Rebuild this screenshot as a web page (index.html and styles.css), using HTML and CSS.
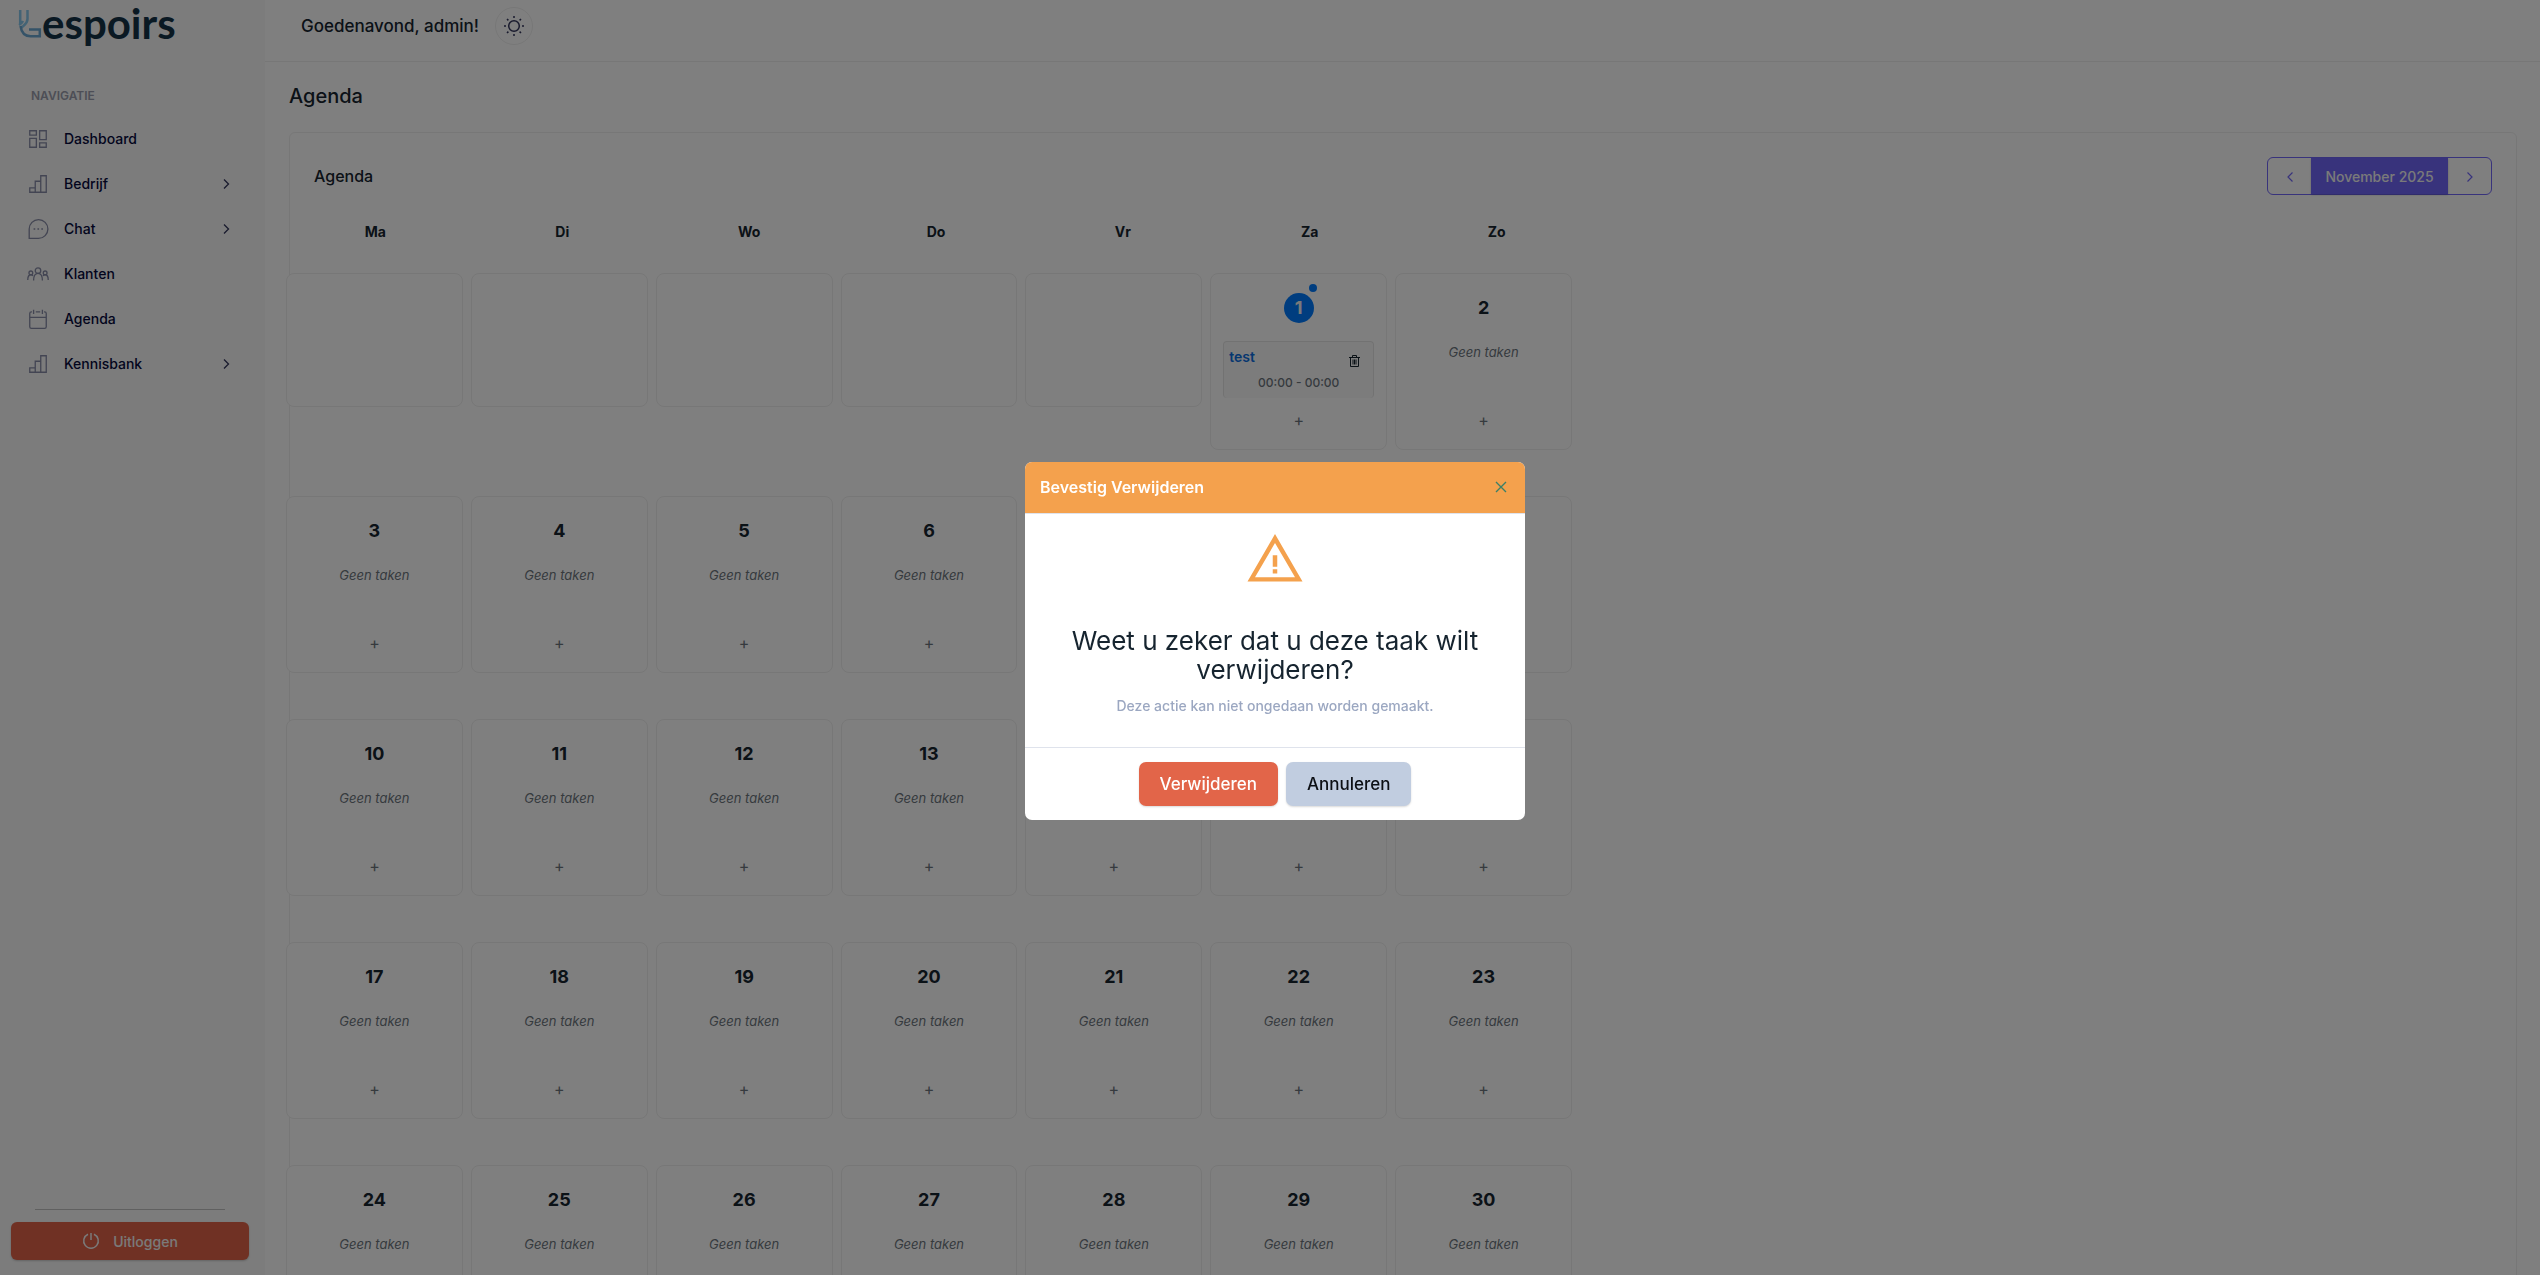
FILE: index.html
```
<!DOCTYPE html>
<html lang="nl">
<head>
    <meta charset="UTF-8">
    <meta name="viewport" content="width=device-width, initial-scale=1.0">
    <title>Agenda</title>
    <link rel="stylesheet" href="styles.css">
</head>
<body>
    <div class="layout">
        <aside class="sidebar">
            <a href="#" class="logo" aria-label="Lespoirs">
                <svg class="logo-mark" width="25" height="30" viewBox="0 0 25 30" fill="none" stroke-width="2.500">
                    <path stroke="#86c6ea" d="M3.200 2v13.500M10.500 2v9c0 5-3.500 6-6.500 9M6 13c-1 2-2 3-4 4"/>
                    <path stroke="#6aa6d0" d="M3.500 18c1 7 5 10.200 10 10.200h9.300v-6.700H12"/>
                </svg>
                <span class="logo-text">espoirs</span>
            </a>
            <p class="nav-label">NAVIGATIE</p>
            <nav class="nav" id="nav"></nav>
            <div class="sidebar-footer">
                <hr>
                <button type="button" class="logout">
                    <svg width="18" height="18" viewBox="0 0 18 18" fill="none" stroke="currentColor" stroke-width="1.500"><path d="M6 2.200a7.300 7.300 0 1 0 6 0M9 1v7"/></svg>
                    Uitloggen
                </button>
            </div>
        </aside>

        <div class="main">
            <header class="topbar">
                <span class="greeting">Goedenavond, admin!</span>
                <button type="button" class="theme-btn" aria-label="Thema">
                    <svg width="22" height="22" viewBox="0 0 22 22" fill="none" stroke="currentColor" stroke-width="1.500">
                        <circle cx="11" cy="11" r="5.300"/>
                        <path d="M11 1v2M11 19v2M1 11h2M19 11h2M4 4l1.400 1.400M16.600 16.600L18 18M4 18l1.400-1.400M16.600 5.400L18 4"/>
                    </svg>
                </button>
            </header>

            <main class="content">
                <h1>Agenda</h1>
                <section class="card">
                    <div class="card-header">
                        <h2>Agenda</h2>
                        <div class="month-nav">
                            <button type="button" aria-label="Vorige maand"><svg width="6" height="10" viewBox="0 0 6 10" fill="none" stroke="currentColor" stroke-width="1.200"><path d="M5.500.500L1 5l4.500 4.500"/></svg></button>
                            <button type="button" class="current">November 2025</button>
                            <button type="button" aria-label="Volgende maand"><svg width="6" height="10" viewBox="0 0 6 10" fill="none" stroke="currentColor" stroke-width="1.200"><path d="M.500.500L5 5 .500 9.500"/></svg></button>
                        </div>
                    </div>
                    <div class="weekdays">
                        <span>Ma</span><span>Di</span><span>Wo</span><span>Do</span><span>Vr</span><span>Za</span><span>Zo</span>
                    </div>
                    <div class="calendar" id="calendar"></div>
                </section>
            </main>
        </div>
    </div>

    <div class="overlay">
        <div class="modal" role="dialog" aria-modal="true" aria-labelledby="modalTitle">
            <div class="modal-header">
                <h5 id="modalTitle">Bevestig Verwijderen</h5>
                <button type="button" class="close" aria-label="Sluiten">
                    <svg width="12" height="12" viewBox="0 0 12 12" stroke="currentColor" stroke-width="1.400"><path d="M1 1l10 10M11 1L1 11"/></svg>
                </button>
            </div>
            <div class="modal-body">
                <svg class="warning" width="60" height="60" viewBox="0 0 24 24" fill="currentColor">
                    <path d="M12 2L1 21h22zM12 5.600L20 19.300H4zM11.100 10.500v4.600h1.800v-4.600zM11.100 16.100v1.700h1.800v-1.700z" fill-rule="evenodd"/>
                </svg>
                <h4>Weet u zeker dat u deze taak wilt verwijderen?</h4>
                <p>Deze actie kan niet ongedaan worden gemaakt.</p>
            </div>
            <div class="modal-footer">
                <button type="button" class="btn btn-danger">Verwijderen</button>
                <button type="button" class="btn btn-light">Annuleren</button>
            </div>
        </div>
    </div>

    <script src="script.js"></script>
</body>
</html>
```
FILE: styles.css
```
* {
    box-sizing: border-box;
}
body {
    margin: 0;
    height: 100vh;
    overflow: hidden;
    font-family: Inter, "Open Sans", sans-serif;
    font-size: 14px;
    font-weight: 500;
    color: #16242f;
    background: #fff;
}
h1, h2, h4, h5, p {
    margin: 0;
}
button {
    font: inherit;
    cursor: pointer;
}
.layout {
    display: flex;
    height: 100vh;
}

/* sidebar */
.sidebar {
    display: flex;
    flex-direction: column;
    flex: 0 0 265px;
    background: #f8f8f8;
}
.logo {
    display: flex;
    height: 52px;
    padding: 8px 0 0 17px;
    text-decoration: none;
}
.logo-text {
    font-family: Lato, sans-serif;
    font-size: 42px;
    font-weight: 700;
    line-height: 30px;
    color: #143247;
}
.nav-label {
    padding: 36px 0 0 31px;
    font-size: 12px;
    font-weight: 600;
    line-height: 16px;
    color: #9a9dac;
}
.nav {
    padding-top: 12px;
}
.nav a {
    display: flex;
    align-items: center;
    height: 45px;
    padding: 0 35px 0 27px;
    color: #060a3c;
    text-decoration: none;
}
.nav a span {
    flex: 1;
    padding-left: 15px;
}
.nav-icon {
    color: #878ba6;
}
.chevron {
    color: #33365c;
}
.sidebar-footer {
    margin-top: auto;
    padding: 0 16px 15px 11px;
}
.sidebar-footer hr {
    margin: 0 24px 12px;
    border: 0;
    border-top: 1px solid #c0c0c0;
}
.logout {
    display: flex;
    justify-content: center;
    align-items: center;
    gap: 13px;
    width: 100%;
    height: 38px;
    border: 0;
    border-radius: 6px;
    background: #e16349;
    color: #f4f4f4;
    box-shadow: 0 1px 2px rgba(0, 0, 0, 0.2);
}

/* top bar */
.main {
    flex: 1;
    min-width: 0;
    overflow: hidden;
}
.topbar {
    display: flex;
    align-items: center;
    gap: 16px;
    height: 62px;
    padding: 0 36px 10px;
    border-bottom: 1px solid #efefef;
}
.greeting {
    font-size: 17px;
}
.theme-btn {
    display: flex;
    align-items: center;
    justify-content: center;
    width: 38px;
    height: 38px;
    padding: 0;
    border: 1px solid #efefef;
    border-radius: 50%;
    background: none;
    color: #33365c;
}

/* agenda */
.content {
    padding: 20px 23px 24px 24px;
}
h1 {
    margin-bottom: 22px;
    font-size: 20px;
    font-weight: 500;
    line-height: 28px;
}
.card {
    border: 1px solid #efefef;
    border-radius: 6px;
}
.card-header {
    display: flex;
    justify-content: space-between;
    align-items: center;
    padding: 24px 24px 0;
}
h2 {
    font-size: 16px;
    font-weight: 500;
}
.month-nav {
    display: flex;
    height: 38px;
    border: 1px solid #7066f8;
    border-radius: 6px;
}
.month-nav button {
    width: 43px;
    padding: 0;
    border: 0;
    background: none;
    color: #7066f8;
}
.month-nav .current {
    width: 137px;
    background: #7066f8;
    color: #f4f4f4;
    box-shadow: 0 1px 2px rgba(0, 0, 0, 0.2);
}
.weekdays {
    display: grid;
    grid-template-columns: repeat(7, 1fr);
    max-width: 1308px;
    margin: 27px 0 31px -8px;
    font-weight: 700;
    line-height: 20px;
    text-align: center;
}
.calendar {
    display: grid;
    grid-template-columns: repeat(7, 1fr);
    align-items: start;
    gap: 46px 8px;
    max-width: 1286px;
    margin-left: -4px;
}
.day {
    display: flex;
    flex-direction: column;
    align-items: center;
    min-height: 134px;
    padding: 19px 12px 17px;
    border: 1px solid #efefef;
    border-radius: 8px;
    background: #fff;
}
.day.filled {
    height: 177px;
}
.number {
    position: relative;
    width: 30px;
    height: 30px;
    font-size: 18px;
    font-weight: 700;
    line-height: 30px;
    text-align: center;
}
.today {
    border-radius: 50%;
    background: #007bff;
    color: #f4f4f4;
}
.today::after {
    content: "";
    position: absolute;
    top: -9px;
    right: -3px;
    width: 8px;
    height: 8px;
    border-radius: 50%;
    background: #007bff;
}
.empty {
    padding-top: 19px;
    font-size: 13px;
    font-weight: 400;
    font-style: italic;
    line-height: 20px;
    color: #6c757d;
}
.add {
    margin-top: auto;
    padding: 0;
    border: 0;
    background: none;
    color: #6c757d;
    font-size: 16px;
    font-weight: 400;
    line-height: 24px;
}
.task {
    width: 100%;
    height: 57px;
    margin-top: 18px;
    padding: 5px;
    border: 1px solid #e4e4e4;
    border-bottom: 0;
    border-radius: 4px;
    background: #f9f9f9;
}
.task-top {
    display: flex;
    justify-content: space-between;
    line-height: 20px;
}
.task-top a {
    font-weight: 600;
    color: #0a6ee0;
    text-decoration: none;
}
.task-top button {
    height: 12px;
    margin: 8px 8px 0 0;
    padding: 0;
    border: 0;
    background: none;
    color: #16242f;
    line-height: 0;
}
.time {
    padding-top: 6px;
    font-size: 12px;
    line-height: 20px;
    text-align: center;
    color: #6c757d;
}

/* delete confirmation */
.overlay {
    position: fixed;
    inset: 0;
    display: flex;
    align-items: center;
    justify-content: center;
    padding: 6px 0 0 10px;
    background: rgba(0, 0, 0, 0.5);
}
.modal {
    width: 500px;
    border-radius: 7px;
    background: #fff;
    overflow: hidden;
}
.modal-header {
    display: flex;
    align-items: center;
    justify-content: space-between;
    height: 52px;
    padding: 0 18px 0 15px;
    border-bottom: 1px solid #dfe3ec;
    background: #f4a14d;
}
h5 {
    font-size: 16px;
    font-weight: 600;
    color: #fff;
}
.close {
    display: flex;
    padding: 0;
    border: 0;
    background: none;
    color: #3c7f68;
}
.modal-body {
    padding: 15px 40px 31px;
    text-align: center;
}
.warning {
    display: block;
    margin: 0 auto 37px;
    color: #f4a14d;
}
h4 {
    margin-bottom: 12px;
    font-size: 26px;
    font-weight: 400;
    line-height: 29px;
}
.modal-body p {
    line-height: 20px;
    color: #9ba7c1;
}
.modal-footer {
    display: flex;
    justify-content: center;
    gap: 8px;
    padding: 14px;
    border-top: 1px solid #dfe3ec;
}
.btn {
    height: 44px;
    padding: 0 21px;
    border: 0;
    border-radius: 7px;
    font-size: 17px;
    box-shadow: 0 1px 2px rgba(0, 0, 0, 0.15);
}
.btn-danger {
    background: #e26549;
    color: #fff;
}
.btn-light {
    background: #c1cde0;
    color: #0c0f14;
}
```
FILE: script.js
```
const icons = {
    grid: '<path d="M2.500 2.500h6v4h-6zM11.500 2.500h6v8h-6zM2.500 9.500h6v8h-6zM11.500 13.500h6v4h-6z"/>',
    chart: '<path d="M2.500 13.500h5v4h-5zM7.500 7.500h5v10h-5zM12.500 2.500h5v15h-5z"/>',
    chat: '<path d="M2 18.500V10a8.500 8.500 0 1 1 8.500 8.500zM6 10h1.500M9.500 10H11M13 10h1.500"/>',
    users: '<circle cx="10" cy="7" r="2.500"/><circle cx="3.500" cy="9" r="1.700"/><circle cx="16.500" cy="9" r="1.700"/><path d="M6 16c0-4 1.500-6.500 4-6.500s4 2.500 4 6.500M.700 15.500c0-3 1-4.800 2.800-4.800 1 0 1.500.400 2 1M19.300 15.500c0-3-1-4.800-2.800-4.800-1 0-1.500.400-2 1"/>',
    calendar: '<path d="M4.500 3.500H4a1.500 1.500 0 0 0-1.500 1.500v12A1.500 1.500 0 0 0 4 18.500h12a1.500 1.500 0 0 0 1.500-1.500V5A1.500 1.500 0 0 0 16 3.500h-.500M8 3.500h4M2.500 8.500h15M6 1.500v4M14 1.500v4"/>'
};

const items = [
    ['Dashboard', 'grid'],
    ['Bedrijf', 'chart', true],
    ['Chat', 'chat', true],
    ['Klanten', 'users'],
    ['Agenda', 'calendar'],
    ['Kennisbank', 'chart', true]
];

document.getElementById('nav').innerHTML = items.map(([name, icon, sub]) => `
    <a href="#">
        <svg class="nav-icon" width="22" height="22" viewBox="0 0 20 20" fill="none" stroke="currentColor" stroke-width="1.200">${icons[icon]}</svg>
        <span>${name}</span>
        ${sub ? '<svg class="chevron" width="7" height="10" viewBox="0 0 7 10" fill="none" stroke="currentColor" stroke-width="1.300"><path d="M1 .500L5.500 5 1 9.500"/></svg>' : ''}
    </a>`).join('');

const trash = '<svg width="11" height="12" viewBox="0 0 11 12" fill="none" stroke="currentColor"><path d="M0 2.500h11M3.500 2V.500h4V2M1.500 3v8.500h8V3M4 4.500v5M5.500 4.500v5M7 4.500v5"/></svg>';

// November 2025 starts on a saturday
let days = '<div class="day"></div>'.repeat(5);
for (let d = 1; d <= 30; d++) {
    const body = d === 1
        ? `<div class="task">
               <div class="task-top"><a href="#">test</a><button type="button" aria-label="Verwijderen">${trash}</button></div>
               <div class="time">00:00 - 00:00</div>
           </div>`
        : '<div class="empty">Geen taken</div>';
    days += `<div class="day filled"><div class="number${d === 1 ? ' today' : ''}">${d}</div>${body}<button type="button" class="add">+</button></div>`;
}
document.getElementById('calendar').innerHTML = days;
```
